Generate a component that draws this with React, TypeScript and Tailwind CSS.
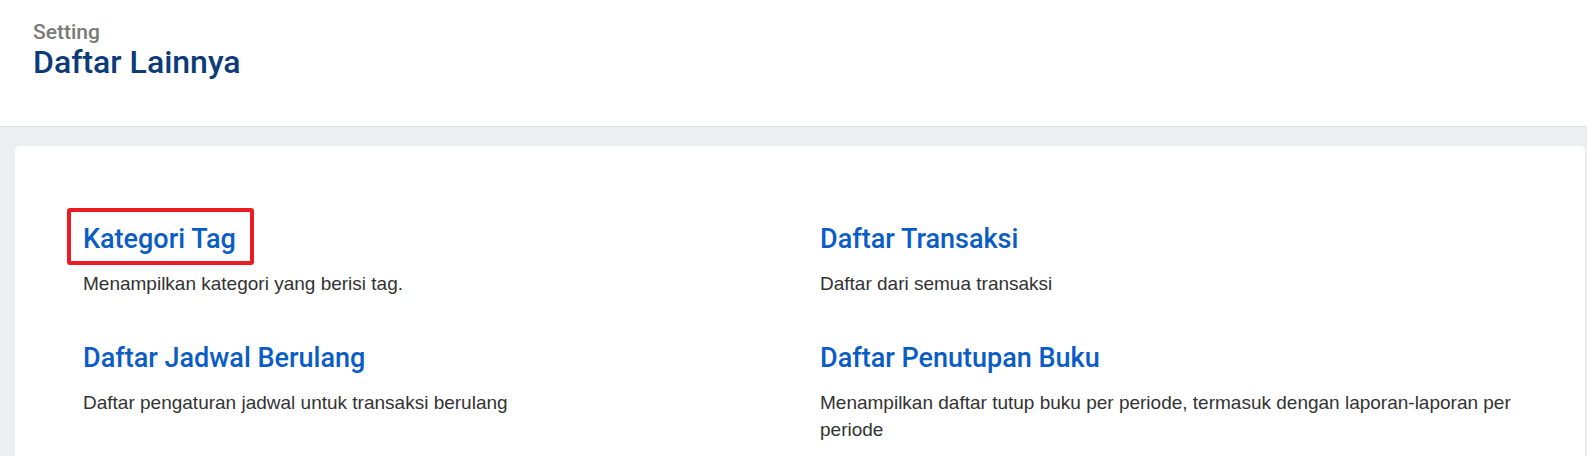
const items = [
  {
    title: "Kategori Tag",
    desc: "Menampilkan kategori yang berisi tag.",
    highlight: true,
  },
  {
    title: "Daftar Transaksi",
    desc: "Daftar dari semua transaksi",
  },
  {
    title: "Daftar Jadwal Berulang",
    desc: "Daftar pengaturan jadwal untuk transaksi berulang",
  },
  {
    title: "Daftar Penutupan Buku",
    desc: "Menampilkan daftar tutup buku per periode, termasuk dengan laporan-laporan per periode",
  },
];

export default function App() {
  return (
    <div className="min-h-screen bg-[#eceff1] font-['Roboto',sans-serif]">
      <header className="h-[127px] border-b border-[#e0e3e5] bg-white px-[33px] pt-[21px]">
        <p className="text-[21px] leading-[23px] font-medium text-[#7a7a7a]">Setting</p>
        <h1 className="text-[32px] leading-[36px] font-medium text-[#0d3b7a]">
          Daftar Lainnya
        </h1>
      </header>

      <main className="pt-[19px] pl-[15px] pr-[2px]">
        <section className="rounded-[5px] bg-white pt-[77px] pb-[60px] pl-[68px]">
          <div className="grid grid-cols-[737px_728px] gap-y-[45px]">
            {items.map((item) => (
              <div key={item.title}>
                <a href="#" className="relative inline-block">
                  <span className="block text-[27px] leading-[32px] font-medium text-[#0a5cc6]">
                    {item.title}
                  </span>
                  {item.highlight && (
                    <span className="absolute -top-[15px] -right-[18px] -bottom-[10px] -left-[16px] rounded-[3px] border-[4px] border-[#ec1c24]" />
                  )}
                </a>
                <p className="mt-[15px] font-['Liberation_Sans',Arial,sans-serif] text-[19px] leading-[27px] text-[#333]">
                  {item.desc}
                </p>
              </div>
            ))}
          </div>
        </section>
      </main>
    </div>
  );
}
